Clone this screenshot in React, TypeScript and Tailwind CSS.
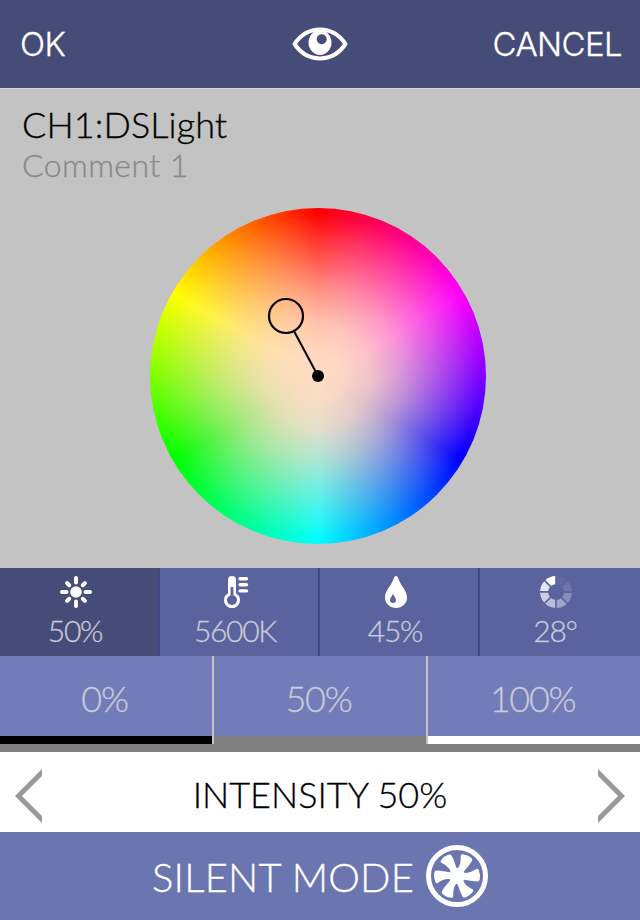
import { useState } from 'react';
import clsx from 'clsx';

interface Tab {
  id: string;
  value: string;
  icon: React.ReactNode;
}

interface Preset {
  label: string;
  bar: string;
}

const EyeIcon = () => (
  <svg width="56" height="34" viewBox="0 0 56 34" fill="none">
    <path
      d="M2.5 17C9 7.5 17.5 2.6 28 2.6S47 7.5 53.5 17C47 26.500 38.500 31.400 28 31.400S9 26.500 2.500 17Z"
      stroke="#fff"
      strokeWidth="4"
      strokeLinejoin="round"
    />
    <ellipse cx="28" cy="15.500" rx="11.500" ry="12.500" fill="#fff" />
    <circle cx="29.700" cy="12.300" r="5" fill="#464c78" />
  </svg>
);

const SunIcon = () => (
  <svg width="32" height="32" viewBox="0 0 32 32">
    <circle cx="16" cy="16" r="5.8" fill="#fff" />
    {[0, 45, 90, 135, 180, 225, 270, 315].map((deg) => (
      <path
        key={deg}
        d={deg % 90 === 0 ? 'M16 2V6.500' : 'M16 3.400V6.400'}
        stroke="#fff"
        strokeWidth="4"
        strokeLinecap="round"
        transform={`rotate(${deg} 16 16)`}
      />
    ))}
  </svg>
);

const ThermometerIcon = () => (
  <svg width="32" height="32" viewBox="0 0 32 32">
    <path
      fill="#fff"
      fillRule="evenodd"
      d="M8 4a4 4 0 0 1 8 0V17.300a8 8 0 1 1-8 0ZM10.600 11V19.200a5 5 0 1 0 2.800 0V11Z"
    />
    <path d="M20 2.700H26.500M20 8.800H26.500M20 14.900H26.500" stroke="#fff" strokeWidth="3.400" strokeLinecap="round" />
  </svg>
);

const DropIcon = () => (
  <svg width="32" height="32" viewBox="0 0 32 32">
    <path
      fill="#fff"
      d="M16 0C17.200 0 17.800 1 18.300 2.600C20.500 9.500 27 14.500 27 21.500C27 27.500 22 32 16 32S5 27.500 5 21.500C5 14.500 11.500 9.500 13.700 2.600C14.200 1 14.800 0 16 0Z"
    />
    <path fill="#5a639e" d="M13 17.500C13.500 20 16 21.500 16 24A3 3 0 0 1 10 24C10 21.500 12.500 20 13 17.500Z" />
  </svg>
);

const HueIcon = () => (
  <svg width="32" height="32" viewBox="0 0 32 32">
    {[0.04, 0.12, 0.28, 0.42, 0.58, 0.7, 0.84, 1].map((opacity, i) => (
      <path
        key={i}
        d="M16.900 0.100A16 16 0 0 1 26.700 4.200L21 9.900A8 8 0 0 0 16.900 8.200Z"
        fill="#fff"
        fillOpacity={opacity}
        transform={`rotate(${i * 45} 16 16)`}
      />
    ))}
  </svg>
);

const FanIcon = () => (
  <svg width="62" height="62" viewBox="-31 -31 62 62">
    <circle r="28.500" fill="none" stroke="#fff" strokeWidth="5" />
    <circle r="8" fill="#fff" />
    {[28, 88, 148, 208, 268, 328].map((deg) => (
      <path
        key={deg}
        fill="#fff"
        d="M-6.200-19.500Q-7-21.200-5.200-21.900Q0-23.800 4.400-22.600Q6.200-22 6.200-20.200C6-15.500 4.800-12 3.800-6H-3.200C-1.800-11-3.600-15-6.200-19.500Z"
        transform={`rotate(${deg})`}
      />
    ))}
  </svg>
);

const ColorWheel = () => (
  <div className="relative h-[336px] w-[336px] rounded-full bg-[radial-gradient(circle_closest-side,#ffdcc3_0%,#ffdcc3f8_15%,#ffdcc3e0_32%,#ffdcc3ac_50%,#ffdcc35c_72%,#ffdcc300_97%),conic-gradient(#f00,#f0f,#00f,#0ff,#0f0,#ff0,#f00)]">
    <svg className="absolute inset-0" width="336" height="336" viewBox="0 0 336 336">
      <path d="M144.500 124L168 168" stroke="#000" strokeWidth="2" />
      <circle cx="136" cy="108" r="17" fill="none" stroke="#000" strokeWidth="2.200" />
      <circle cx="168" cy="168" r="6" />
    </svg>
  </div>
);

const tabs: Tab[] = [
  { id: 'intensity', value: '50%', icon: <SunIcon /> },
  { id: 'temperature', value: '5600K', icon: <ThermometerIcon /> },
  { id: 'saturation', value: '45%', icon: <DropIcon /> },
  { id: 'hue', value: '28°', icon: <HueIcon /> },
];

const presets: Preset[] = [
  { label: '0%', bar: 'bg-black' },
  { label: '50%', bar: 'bg-[#808080]' },
  { label: '100%', bar: 'bg-white' },
];

const App = () => {
  const [active, setActive] = useState('intensity');

  return (
    <div className="flex h-[920px] w-[640px] flex-col overflow-hidden bg-[#c3c3c3] font-['Lato','Liberation_Sans',sans-serif] font-light [-webkit-text-stroke:0.3px]">
      {/* Top bar */}
      <header className="grid h-[88px] grid-cols-[1fr_56px_1fr] items-center bg-[#464c78] px-5 font-['Inter','Liberation_Sans',sans-serif] text-[33px] text-white">
        <button className="pt-0.5 text-left tracking-[-0.6px]">OK</button>
        <button className="flex justify-center">
          <EyeIcon />
        </button>
        <button className="-mr-0.5 pt-0.5 text-right tracking-[-0.6px]">CANCEL</button>
      </header>

      {/* Channel and colour wheel */}
      <main className="flex h-[480px] flex-col border-t border-[#d0d0d0]">
        <div className="h-[119px] pt-[13px] pl-[22px]">
          <h1 className="text-[36px] leading-[44px] tracking-[0.1px] text-black">CH1:DSLight</h1>
          <p className="text-[32px] leading-[37px] tracking-[0.4px] text-[#8a8a8a]">Comment 1</p>
        </div>
        <div className="flex justify-center pr-1">
          <ColorWheel />
        </div>
      </main>

      {/* Parameter tabs */}
      <nav className="grid h-[88px] grid-cols-4">
        {tabs.map((tab) => (
          <button
            key={tab.id}
            onClick={() => setActive(tab.id)}
            className={clsx(
              'flex flex-col items-center border-r-2 border-[#404985] pt-2 pr-1.5 last:border-r-0 last:pr-2',
              active === tab.id ? 'bg-[#464c78]' : 'bg-[#5a639e]'
            )}
          >
            {tab.icon}
            <span className="pr-0.5 text-[30px] leading-[44px] tracking-[-1.3px] text-[#c8cad8]">{tab.value}</span>
          </button>
        ))}
      </nav>

      {/* Presets */}
      <div className="grid h-24 grid-cols-[214px_214px_212px] bg-[#808080] pb-2">
        {presets.map((preset) => (
          <button
            key={preset.label}
            className="flex flex-col border-r-2 border-[#c3c3c3] bg-[#727cb8] text-[36px] tracking-[-1.3px] text-[#c8cad8] last:border-r-0"
          >
            <span className="flex w-full flex-1 items-center justify-center pt-1 pr-[3px]">{preset.label}</span>
            <span className={clsx('h-2 w-full', preset.bar)} />
          </button>
        ))}
      </div>

      {/* Current parameter */}
      <div className="flex h-20 items-center justify-between bg-white px-[15px] text-[36px] text-black">
        <button className="pt-2">
          <svg width="27" height="54" viewBox="0 0 27 54">
            <path fill="#999" d="M27 0V7L7 27L27 47V54L0 27Z" />
          </svg>
        </button>
        <span className="pt-1">INTENSITY 50%</span>
        <button className="pt-2">
          <svg width="27" height="54" viewBox="0 0 27 54">
            <path fill="#999" d="M0 0V7L20 27L0 47V54L27 27Z" />
          </svg>
        </button>
      </div>

      <button className="flex h-[88px] items-center justify-center gap-3 bg-[#6b75b0] text-[40px] tracking-[0.2px] text-white">
        <span className="pt-px">SILENT MODE</span>
        <FanIcon />
      </button>
    </div>
  );
};

export default App;
